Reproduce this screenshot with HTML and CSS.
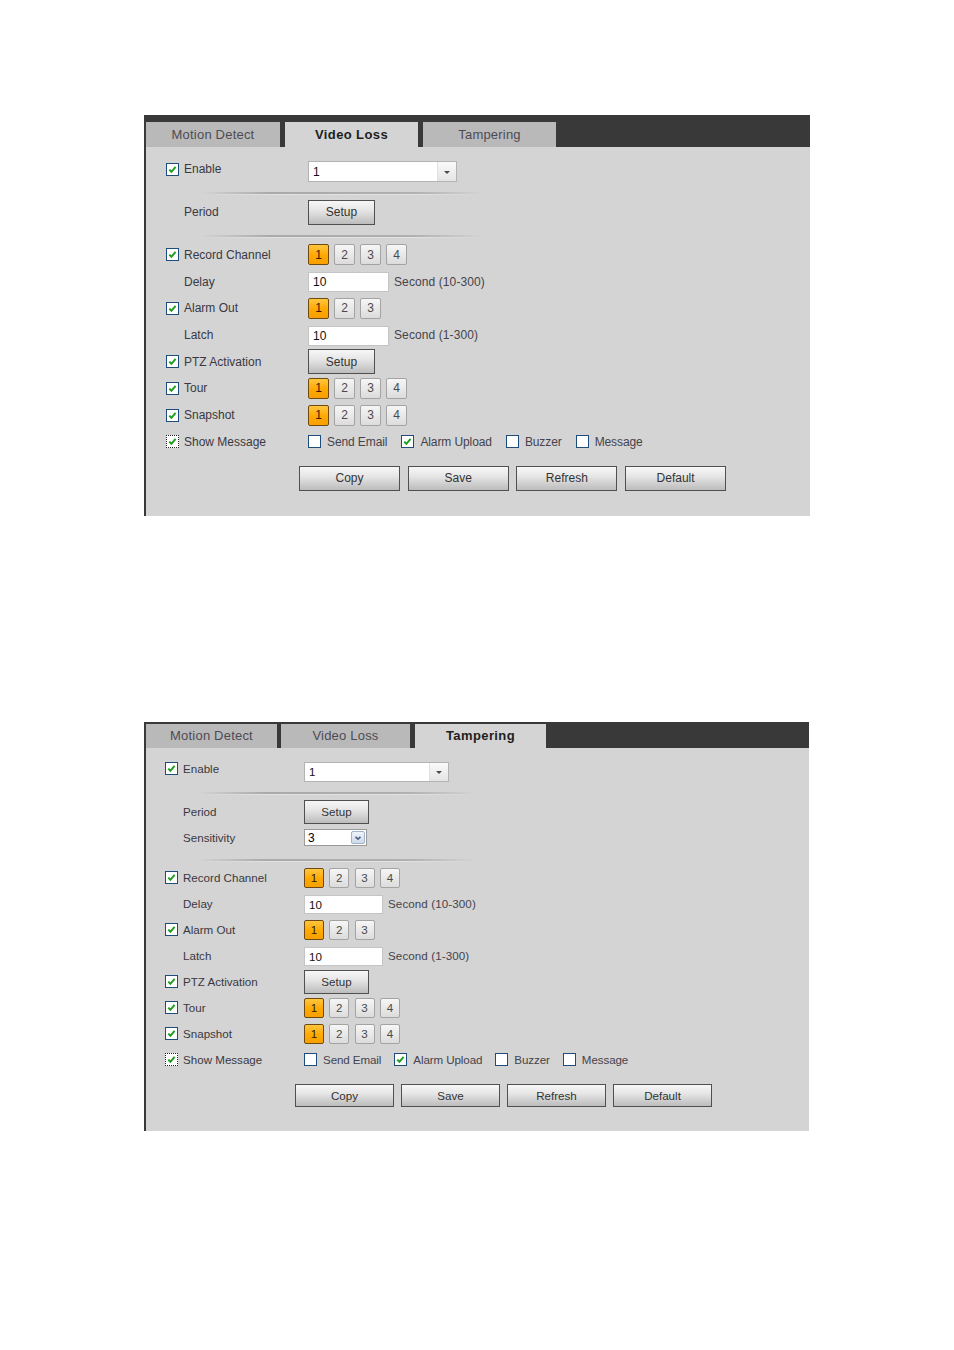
FILE: index.html
```html
<!DOCTYPE html>
<html>
<head>
<meta charset="utf-8">
<title>Alarm settings</title>
<link rel="stylesheet" href="styles.css">
</head>
<body>
<div class="page">

  <section class="panel panel-a">
    <div class="tabs">
      <div class="tab t1">Motion Detect</div>
      <div class="tab t2 active">Video Loss</div>
      <div class="tab t3">Tampering</div>
    </div>
    <div class="body">
      <div class="row row-enable">
        <div class="lab"><span class="cb on"><svg viewBox="0 0 11 11"><path d="M2.3 5.6 L4.4 7.8 L8.6 2.9" /></svg></span><span>Enable</span></div>
        <div class="dropdown"><span class="dd-val">1</span><span class="dd-btn"><span class="tri"></span></span></div>
      </div>
      <div class="sep sep1"></div>
      <div class="row row-tall">
        <div class="lab"><span class="cb-space"></span><span>Period</span></div>
        <button class="btn setup">Setup</button>
      </div>
      <div class="sep sep2"></div>
      <div class="row">
        <div class="lab"><span class="cb on"><svg viewBox="0 0 11 11"><path d="M2.3 5.6 L4.4 7.8 L8.6 2.9" /></svg></span><span>Record Channel</span></div>
        <div class="chans"><span class="ch act">1</span><span class="ch">2</span><span class="ch">3</span><span class="ch">4</span></div>
      </div>
      <div class="row">
        <div class="lab"><span class="cb-space"></span><span>Delay</span></div>
        <div class="field">10</div><span class="unit">Second (10-300)</span>
      </div>
      <div class="row">
        <div class="lab"><span class="cb on"><svg viewBox="0 0 11 11"><path d="M2.3 5.6 L4.4 7.8 L8.6 2.9" /></svg></span><span>Alarm Out</span></div>
        <div class="chans"><span class="ch act">1</span><span class="ch">2</span><span class="ch">3</span></div>
      </div>
      <div class="row">
        <div class="lab"><span class="cb-space"></span><span>Latch</span></div>
        <div class="field">10</div><span class="unit">Second (1-300)</span>
      </div>
      <div class="row">
        <div class="lab"><span class="cb on"><svg viewBox="0 0 11 11"><path d="M2.3 5.6 L4.4 7.8 L8.6 2.9" /></svg></span><span>PTZ Activation</span></div>
        <button class="btn setup">Setup</button>
      </div>
      <div class="row">
        <div class="lab"><span class="cb on"><svg viewBox="0 0 11 11"><path d="M2.3 5.6 L4.4 7.8 L8.6 2.9" /></svg></span><span>Tour</span></div>
        <div class="chans"><span class="ch act">1</span><span class="ch">2</span><span class="ch">3</span><span class="ch">4</span></div>
      </div>
      <div class="row">
        <div class="lab"><span class="cb on"><svg viewBox="0 0 11 11"><path d="M2.3 5.6 L4.4 7.8 L8.6 2.9" /></svg></span><span>Snapshot</span></div>
        <div class="chans"><span class="ch act">1</span><span class="ch">2</span><span class="ch">3</span><span class="ch">4</span></div>
      </div>
      <div class="row">
        <div class="lab"><span class="cb on focus"><svg viewBox="0 0 11 11"><path d="M2.3 5.6 L4.4 7.8 L8.6 2.9" /></svg></span><span>Show Message</span></div>
        <div class="opts">
          <span class="opt"><span class="cb"></span><span>Send Email</span></span>
          <span class="opt"><span class="cb on"><svg viewBox="0 0 11 11"><path d="M2.3 5.6 L4.4 7.8 L8.6 2.9" /></svg></span><span>Alarm Upload</span></span>
          <span class="opt"><span class="cb"></span><span>Buzzer</span></span>
          <span class="opt"><span class="cb"></span><span>Message</span></span>
        </div>
      </div>
      <div class="actions">
        <button class="btn act-btn">Copy</button>
        <button class="btn act-btn">Save</button>
        <button class="btn act-btn">Refresh</button>
        <button class="btn act-btn">Default</button>
      </div>
    </div>
  </section>

  <section class="panel panel-b">
    <div class="tabs">
      <div class="tab t1">Motion Detect</div>
      <div class="tab t2">Video Loss</div>
      <div class="tab t3 active">Tampering</div>
    </div>
    <div class="body">
      <div class="row row-enable">
        <div class="lab"><span class="cb on"><svg viewBox="0 0 11 11"><path d="M2.3 5.6 L4.4 7.8 L8.6 2.9" /></svg></span><span>Enable</span></div>
        <div class="dropdown"><span class="dd-val">1</span><span class="dd-btn"><span class="tri"></span></span></div>
      </div>
      <div class="sep sep1"></div>
      <div class="row">
        <div class="lab"><span class="cb-space"></span><span>Period</span></div>
        <button class="btn setup">Setup</button>
      </div>
      <div class="row">
        <div class="lab"><span class="cb-space"></span><span>Sensitivity</span></div>
        <div class="sens"><span class="sens-val">3</span><span class="sens-btn"><svg viewBox="0 0 10 10"><path d="M2.5 3.8 L5 6.2 L7.5 3.8" /></svg></span></div>
      </div>
      <div class="sep sep2"></div>
      <div class="row">
        <div class="lab"><span class="cb on"><svg viewBox="0 0 11 11"><path d="M2.3 5.6 L4.4 7.8 L8.6 2.9" /></svg></span><span>Record Channel</span></div>
        <div class="chans"><span class="ch act">1</span><span class="ch">2</span><span class="ch">3</span><span class="ch">4</span></div>
      </div>
      <div class="row">
        <div class="lab"><span class="cb-space"></span><span>Delay</span></div>
        <div class="field">10</div><span class="unit">Second (10-300)</span>
      </div>
      <div class="row">
        <div class="lab"><span class="cb on"><svg viewBox="0 0 11 11"><path d="M2.3 5.6 L4.4 7.8 L8.6 2.9" /></svg></span><span>Alarm Out</span></div>
        <div class="chans"><span class="ch act">1</span><span class="ch">2</span><span class="ch">3</span></div>
      </div>
      <div class="row">
        <div class="lab"><span class="cb-space"></span><span>Latch</span></div>
        <div class="field">10</div><span class="unit">Second (1-300)</span>
      </div>
      <div class="row">
        <div class="lab"><span class="cb on"><svg viewBox="0 0 11 11"><path d="M2.3 5.6 L4.4 7.8 L8.6 2.9" /></svg></span><span>PTZ Activation</span></div>
        <button class="btn setup">Setup</button>
      </div>
      <div class="row">
        <div class="lab"><span class="cb on"><svg viewBox="0 0 11 11"><path d="M2.3 5.6 L4.4 7.8 L8.6 2.9" /></svg></span><span>Tour</span></div>
        <div class="chans"><span class="ch act">1</span><span class="ch">2</span><span class="ch">3</span><span class="ch">4</span></div>
      </div>
      <div class="row">
        <div class="lab"><span class="cb on"><svg viewBox="0 0 11 11"><path d="M2.3 5.6 L4.4 7.8 L8.6 2.9" /></svg></span><span>Snapshot</span></div>
        <div class="chans"><span class="ch act">1</span><span class="ch">2</span><span class="ch">3</span><span class="ch">4</span></div>
      </div>
      <div class="row">
        <div class="lab"><span class="cb on focus"><svg viewBox="0 0 11 11"><path d="M2.3 5.6 L4.4 7.8 L8.6 2.9" /></svg></span><span>Show Message</span></div>
        <div class="opts">
          <span class="opt"><span class="cb"></span><span>Send Email</span></span>
          <span class="opt"><span class="cb on"><svg viewBox="0 0 11 11"><path d="M2.3 5.6 L4.4 7.8 L8.6 2.9" /></svg></span><span>Alarm Upload</span></span>
          <span class="opt"><span class="cb"></span><span>Buzzer</span></span>
          <span class="opt"><span class="cb"></span><span>Message</span></span>
        </div>
      </div>
      <div class="actions">
        <button class="btn act-btn">Copy</button>
        <button class="btn act-btn">Save</button>
        <button class="btn act-btn">Refresh</button>
        <button class="btn act-btn">Default</button>
      </div>
    </div>
  </section>

</div>
</body>
</html>
```

FILE: styles.css
```css
html, body {
  margin: 0;
  padding: 0;
  background: #ffffff;
}

body {
  font-family: "Liberation Sans", Arial, sans-serif;
  color: #333333;
}

.page {
  padding-top: 115px;
  padding-left: 144px;
  display: flex;
  flex-direction: column;
}

.panel {
  box-sizing: border-box;
  background: #d4d4d4;
}

.panel-a {
  width: 666px;
  --fs: 12px;
  --rowh: 26.7px;
  --labw: 162px;
  --cbx: 20px;
}

.panel-b {
  width: 665px;
  margin-top: 206px;
  --fs: 11.6px;
  --rowh: 26px;
  --labw: 158px;
  --cbx: 19px;
}

/* ---------- tabs ---------- */
.tabs {
  display: flex;
  align-items: flex-end;
  background: #393939;
  box-sizing: border-box;
  padding-left: 2px;
}

.panel-a .tabs {
  height: 32px;
  gap: 5px;
}

.panel-b .tabs {
  height: 26px;
  gap: 4px;
}

.tab {
  display: flex;
  align-items: center;
  justify-content: center;
  background: #b9b9b9;
  color: #4e4b55;
  font-size: 13px;
  letter-spacing: 0.2px;
}

.tab.active {
  background: #d4d4d4;
  color: #1e1e1e;
  font-weight: bold;
  letter-spacing: 0.4px;
}

.panel-a .tab {
  height: 25px;
}
.panel-a .t1 { width: 134px; }
.panel-a .t2 { width: 133px; }
.panel-a .t3 { width: 133px; }

.panel-b .tab {
  height: 24px;
}
.panel-b .t1 { width: 131px; }
.panel-b .t2 { width: 129px; margin-right: 1px; }
.panel-b .t3 { width: 131px; }

/* ---------- body ---------- */
.body {
  border-left: 2px solid #393939;
  display: flex;
  flex-direction: column;
  font-size: var(--fs);
}

.panel-a .body {
  padding-top: 11px;
  padding-bottom: 25px;
}

.panel-b .body {
  padding-top: 10px;
  padding-bottom: 24px;
}

.row {
  display: flex;
  align-items: center;
  height: var(--rowh);
}

.row-enable {
  height: 22px;
}

.panel-a .row-tall {
  height: 26px;
}

.lab {
  flex: none;
  width: var(--labw);
  box-sizing: border-box;
  padding-left: var(--cbx);
  display: flex;
  align-items: center;
  color: #3a3842;
}

.cb, .cb-space {
  flex: none;
  width: 13px;
  height: 13px;
  margin-right: 5px;
  box-sizing: border-box;
}

.cb {
  border: 1px solid #1e4c7c;
  background: #ffffff;
  display: flex;
  align-items: center;
  justify-content: center;
}

.cb svg {
  width: 11px;
  height: 11px;
}

.cb svg path {
  fill: none;
  stroke: #1f9e1f;
  stroke-width: 2;
}

.cb.focus {
  border: 1px dotted #222222;
}

/* ---------- separators ---------- */
.sep {
  height: 3px;
  background:
    linear-gradient(to right, rgba(168,168,168,0), #a9a9a9 25%, #b0b0b0 75%, rgba(176,176,176,0)) top / 100% 2px no-repeat,
    linear-gradient(to right, rgba(232,232,232,0), #e2e2e2 25%, #e2e2e2 75%, rgba(232,232,232,0)) bottom / 100% 1px no-repeat;
}

.panel-a .sep {
  margin-left: 55px;
  width: 282px;
}

.panel-a .sep1 {
  margin-top: 12px;
  margin-bottom: 4px;
}

.panel-a .sep2 {
  margin-top: 10px;
  margin-bottom: 3.65px;
}

.panel-b .sep {
  margin-left: 52px;
  width: 278px;
}

.panel-b .sep1 {
  margin-top: 12px;
  margin-bottom: 4px;
}

.panel-b .sep2 {
  margin-top: 8px;
  margin-bottom: 3px;
}

/* ---------- dropdown ---------- */
.dropdown {
  display: flex;
  box-sizing: border-box;
  border: 1px solid #b3b3b3;
  background: #ffffff;
}

.panel-a .dropdown {
  width: 149px;
  height: 21px;
  margin-top: 5px;
}

.panel-b .dropdown {
  width: 145px;
  height: 20px;
  margin-top: 6px;
}

.dd-val {
  flex: 1;
  display: flex;
  align-items: center;
  padding-left: 4px;
  color: #111111;
}

.dd-btn {
  flex: none;
  width: 18px;
  border-left: 1px solid #e2e2e2;
  background: linear-gradient(#fafafa, #e4e4e4);
  display: flex;
  align-items: center;
  justify-content: center;
}

.tri {
  width: 0;
  height: 0;
  border-left: 3px solid transparent;
  border-right: 3px solid transparent;
  border-top: 3px solid #4a4a4a;
  margin-top: 1px;
}

/* ---------- sensitivity select ---------- */
.sens {
  display: flex;
  align-items: center;
  box-sizing: border-box;
  width: 63px;
  height: 17px;
  border: 1px solid #9a9a9a;
  background: #ffffff;
}

.sens-val {
  flex: 1;
  padding-left: 3px;
  color: #000000;
  font-size: 12px;
}

.sens-btn {
  flex: none;
  width: 14px;
  height: 13px;
  margin-right: 1px;
  box-sizing: border-box;
  border: 1px solid #9fb3cb;
  border-radius: 2px;
  background: linear-gradient(#eef3f9, #cfdbe8);
  display: flex;
  align-items: center;
  justify-content: center;
}

.sens-btn svg {
  width: 10px;
  height: 10px;
}

.sens-btn svg path {
  fill: none;
  stroke: #4d6185;
  stroke-width: 1.6;
}

/* ---------- buttons ---------- */
.btn {
  font-family: inherit;
  font-size: var(--fs);
  color: #333333;
  box-sizing: border-box;
  border: 1px solid #505050;
  background: linear-gradient(#f7f7f7, #e6e6e6 40%, #bcbcbc);
  padding: 0;
  margin: 0;
}

.panel-a .setup {
  width: 67px;
  height: 25px;
}

.panel-b .setup {
  width: 65px;
  height: 24px;
}

/* ---------- channels ---------- */
.chans {
  display: flex;
}

.panel-a .chans { gap: 5px; }
.panel-b .chans { gap: 5.3px; }

.ch {
  box-sizing: border-box;
  display: flex;
  align-items: center;
  justify-content: center;
  border: 1px solid #a3a3a3;
  border-radius: 2px;
  background: linear-gradient(#f6f6f6, #dcdcdc);
  color: #4a4a4a;
}

.panel-a .ch { width: 21px; height: 21px; }
.panel-b .ch { width: 20px; height: 20px; }

.ch.act {
  border-color: #6e4a12;
  background: linear-gradient(#ffc640, #ffa800 55%, #f7a000);
  color: #2a2000;
}

/* ---------- fields ---------- */
.field {
  box-sizing: border-box;
  background: #ffffff;
  border: 1px solid #c4c4c4;
  display: flex;
  align-items: center;
  padding-left: 4px;
  color: #111111;
}

.panel-a .field { width: 81px; height: 20px; margin-top: 1px; }
.panel-b .field { width: 79px; height: 19px; margin-top: 1px; }

.unit {
  margin-left: 5px;
  color: #45434c;
  letter-spacing: 0.1px;
}

/* ---------- options ---------- */
.opts {
  display: flex;
  align-items: center;
}

.opt {
  display: flex;
  align-items: center;
  color: #45434c;
  letter-spacing: -0.1px;
}

.opt .cb {
  margin-right: 6px;
}

.panel-a .opt { margin-right: 14px; }
.panel-b .opt { margin-right: 13px; }

/* ---------- action buttons ---------- */
.actions {
  display: flex;
}

.panel-a .actions {
  margin-top: 10.75px;
  padding-left: 153px;
  gap: 7.7px;
}

.panel-b .actions {
  margin-top: 11px;
  padding-left: 149px;
  gap: 7px;
}

.panel-a .act-btn { width: 101px; height: 25px; }
.panel-b .act-btn { width: 99px; height: 23px; }
```
